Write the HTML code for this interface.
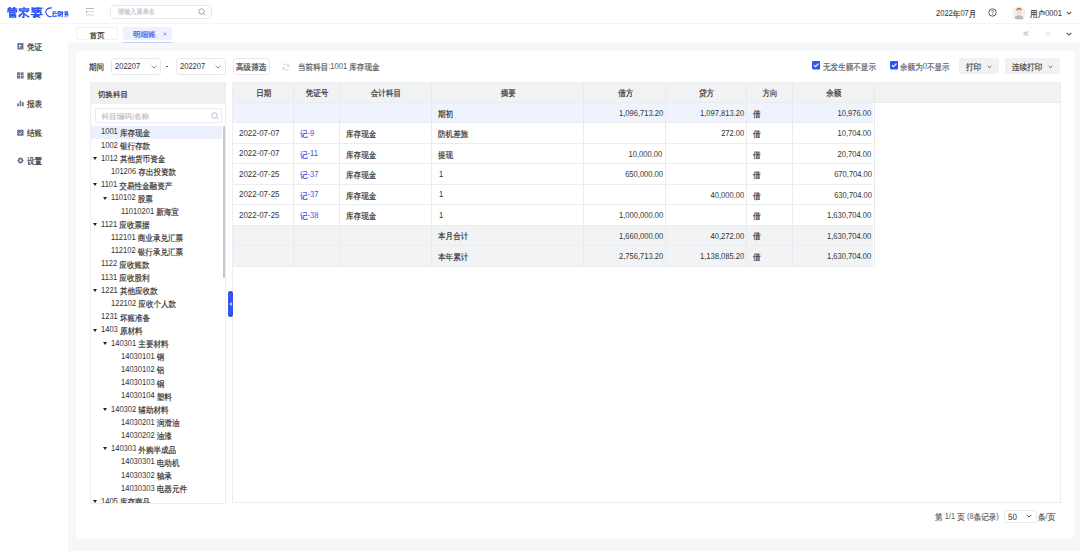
<!DOCTYPE html>
<html><head><meta charset="utf-8">
<style>
@font-face{font-family:"LCJK";src:local("Liberation Sans");size-adjust:130%;unicode-range:U+2E80-9FFF,U+F900-FAFF,U+FF00-FFEF,U+3000-303F;}
*{box-sizing:border-box;margin:0;padding:0}
html,body{width:1080px;height:551px;overflow:hidden}
body{position:relative;background:#f6f7f9;font-family:"LCJK","Liberation Sans",sans-serif;font-size:7.6px;color:#333;line-height:1;text-rendering:geometricPrecision}
.a{position:absolute;white-space:nowrap}
#hdr{left:0;top:0;width:1080px;height:24px;background:#fff;border-bottom:1px solid #f4f5f7}
#side{left:0;top:23.5px;width:68px;height:528px;background:#fff}
#tabs{left:68px;top:23.5px;width:1012px;height:18.5px;background:#fff}
#card{left:76px;top:51px;width:998.5px;height:487.5px;background:#fff;border-radius:5px}
.logo{left:7px;top:5.5px;font-size:11.5px;font-weight:bold;color:#2a4fe6;letter-spacing:0.5px}
.logo2{left:48px;top:9px;font-size:6.5px;font-weight:bold;color:#2a4fe6}
.srch{left:110px;top:5px;width:101.5px;height:13.5px;border:1px solid #e6e8ee;border-radius:5px;background:#fff}
.ph{color:#c3c6cf}
.nav{left:16.8px;width:6px;height:6.5px}
.navt{left:27.7px;color:#333}
.tab{top:27px;height:13px;border-radius:2px;line-height:13px;text-align:center}

.sel{top:58px;height:16.5px;border:1px solid #e7e9ee;border-radius:2.5px;background:#fff}
.btn{top:57.5px;height:16.5px;border-radius:2.5px;background:#f1f2f5}

#tree{left:90px;top:82px;width:135.5px;height:421.5px;border:1px solid #ededf0;overflow:hidden;background:#fff}
#tree .th{position:absolute;left:0;top:0;width:100%;height:20.5px;background:#f1f1f2}
#tree .tht{position:absolute;left:7.5px;top:7.5px;color:#333}
#tree .ts{position:absolute;left:3.5px;top:24.5px;width:127px;height:15.5px;border:1px solid #e8eaef;border-radius:2.5px}
#tree .tsp{position:absolute;left:10.5px;top:28.5px;color:#c0c4cc}
.ti{position:absolute;left:0;width:131px;height:13.2px;color:#333;white-space:nowrap}
.ti span{position:absolute;top:1.9px}
.ti svg{position:absolute;top:5.2px}
.sb{position:absolute;left:131.5px;top:42.5px;width:2.5px;height:152px;background:#c5c8d0;border-radius:1px}
#tbl{left:231.8px;top:82px;width:829.2px;height:420.5px;border:1px solid #ededf0;background:#fff;overflow:hidden}
.hd{position:absolute;left:0;top:0;width:100%;height:20px;background:#f1f2f4;border-bottom:1px solid #e9ebef}
.cl{position:absolute;width:1px;background:#e9eaed}
.rw{position:absolute;left:0;width:640.7px;height:20.45px;border-bottom:1px solid #ebedf1}
.c{position:absolute;top:7.2px;color:#333;white-space:nowrap}
.n{letter-spacing:0}
.lk{color:#4b4ee4}
.c,.ti span,.t{font-size:8.6px;transform:scaleX(0.88);transform-origin:0 0}
.c.n{transform-origin:100% 0}
.c.d{transform:scaleX(0.92)}
.c.hc{transform-origin:50% 0}
.t{margin-left:-0.8px;margin-top:-0.7px}
.tab.t{margin:0;transform:none;font-size:7.6px}
.tht{margin-top:-0.8px;margin-left:-0.8px}

.k{font-weight:inherit;position:relative;top:0.16em;-webkit-text-stroke:0.2px currentColor}
</style></head><body>
<div id="hdr" class="a"></div>
<div id="side" class="a"></div>
<div id="tabs" class="a"></div>
<div id="card" class="a"></div>

<!-- header -->
<svg class="a" style="left:6.5px;top:6.5px" width="62" height="11" viewBox="0 0 62 11">
<g stroke="#2c54f2" stroke-width="1.45" fill="none" stroke-linecap="square">
<path d="M1.5 1.3 L3 0.6 M1.2 2 H4.5 M2.5 2 V3 M6 1.3 L7.5 0.6 M5.8 2 H9.5 M7 2 V3 M1 4.8 V3.6 H9.5 V4.8 M2.8 5.3 V10 M2.8 5.3 H7.8 V7.2 H2.8 M2.8 8.3 H8.5 V10 H2.8"/>
<path d="M17 0.2 V1.5 M12.5 3.3 V2 H21.5 V3.3 M13.5 4 H20 M17 4 C16 6 14.5 7.5 12.3 8.5 M16.2 5.8 C17.8 7.5 19.5 9 21.6 9.8 M16.8 6.5 V10.2 H15.6 M14.5 7 L12.5 9.6 M19.8 4.8 L21.2 3.8"/>
<path d="M25.2 0.8 L26 1.4 M25 2.6 L25.8 3.2 M25 5 L26.3 4 M27.5 1.3 H34.5 M31 0.2 V3.7 M27.5 1.3 V4.6 L27 5.3 M28 3.3 H33.8 C33 4.6 31 5.3 28.3 5.6 M29 3.6 L34 5.4 M24.5 7.6 H35 M29 6.2 C28.5 8 27.5 9.5 26 10.2 C29 10 32 9.2 33.6 6.6 M28.3 8.6 L32.6 10.3"/>
</g>
<circle cx="36.6" cy="1.4" r="0.6" fill="none" stroke="#7a92f5" stroke-width="0.3"/>
<path d="M43.6 1.6 C41.8 0.6 38.8 1.8 38.8 5 C38.8 8.3 41.8 10 44.5 9.4" stroke="#2c54f2" stroke-width="1.2" fill="none"/>
<path d="M40.8 2.6 C41.5 0.9 43.2 0.3 45.2 1" stroke="#2c54f2" stroke-width="0.9" fill="none"/>
<g stroke="#2c54f2" stroke-width="1" fill="none">
<path d="M45.5 4.8 H49.3 M45 6.3 H50 M47 6.3 L45.6 9.4 H49.5 L48.5 8"/>
<path d="M51 4.5 H53.3 V8.7 H51 Z M52.1 5 V8.2 M51.2 9.6 L51.8 8.7 M53.2 9.6 L52.6 8.7 M53.8 5.5 H56.2 M55.3 4.1 V9.8 H54.5 M55.2 6 L53.8 8.3"/>
<path d="M58 4.2 L57.2 5.4 M58.3 4.8 H61 L57.3 7.2 M58 5.5 L61.5 7.2 M57.5 7.6 H61 C61 9 60.5 9.8 59.5 9.8 M59.2 7.6 C59 8.8 58.2 9.6 57.3 10"/>
</g>
</svg>
<svg class="a" style="left:85.8px;top:8px" width="9" height="8" viewBox="0 0 9 8">
<rect x="0" y="0.1" width="8" height="0.8" fill="#a5a5a8"/><rect x="0.6" y="3.3" width="7.4" height="0.8" fill="#c9c9cc"/><rect x="0" y="3" width="0.9" height="1.5" fill="#8a8a8e"/><rect x="0" y="6.5" width="8" height="0.9" fill="#c9c9cc"/>
</svg>
<div class="a srch"></div>
<div class="a t ph" style="left:119px;top:8.5px;font-size:7px"><b class="k">请输入菜单名</b></div>
<svg class="a" style="left:197.5px;top:8px" width="8" height="8" viewBox="0 0 8 8"><circle cx="3.5" cy="3.5" r="2.7" stroke="#8a8d95" stroke-width="0.8" fill="none"/><path d="M5.5 5.5 L7.3 7.3" stroke="#8a8d95" stroke-width="0.8"/></svg>

<div class="a t" style="left:936.5px;top:9.5px;color:#333">2022<b class="k">年</b>07<b class="k">月</b></div>
<svg class="a" style="left:987.5px;top:8px" width="9" height="9" viewBox="0 0 9 9"><circle cx="4.5" cy="4.5" r="3.7" stroke="#5a5a5a" stroke-width="0.95" fill="none"/><path d="M3.2 3.3 C3.3 2.4 5.7 2.3 5.7 3.4 C5.7 4.3 4.5 4.3 4.5 5.4" stroke="#5a5a5a" stroke-width="0.85" fill="none"/><circle cx="4.5" cy="6.5" r="0.5" fill="#5a5a5a"/></svg>
<svg class="a" style="left:1011.5px;top:5.5px" width="14" height="14" viewBox="0 0 14 14">
<circle cx="7" cy="7" r="6.8" fill="#f1f1f1"/>
<path d="M2.5 12.5 C3 10 5 9.3 7 9.3 C9 9.3 11 10 11.5 12.5 C10 13.7 4 13.7 2.5 12.5Z" fill="#b9b9b9"/>
<ellipse cx="7" cy="5.8" rx="2.4" ry="2.9" fill="#f6ddd0"/>
<path d="M4.4 5 C4.2 2.6 5.5 1.8 7 1.8 C8.6 1.8 9.8 2.6 9.6 5 C9 3.8 8 3.5 7 3.5 C6 3.5 5 3.8 4.4 5Z" fill="#c8692c"/>
</svg>
<div class="a t" style="left:1031px;top:9.5px;color:#333"><b class="k">用户</b>0001</div>
<svg class="a" style="left:1065.5px;top:11px" width="6" height="4" viewBox="0 0 6 4"><path d="M0.8 0.8 L3 3 L5.2 0.8" stroke="#555" stroke-width="1.05" fill="none"/></svg>

<!-- sidebar -->
<svg class="a" style="left:16.5px;top:43px" width="7" height="7" viewBox="0 0 7 7"><rect x="0.3" y="0" width="6.2" height="6.6" rx="0.6" fill="#6e7699"/><rect x="2" y="2" width="2" height="1.2" fill="#fff"/><rect x="2" y="3.2" width="0.8" height="1.6" fill="#fff"/></svg>
<div class="a t navt" style="top:42.5px"><b class="k">凭证</b></div>
<svg class="a" style="left:16.5px;top:71.5px" width="7" height="7" viewBox="0 0 7 7"><rect x="0" y="0.3" width="3" height="6.2" fill="#6e7699"/><rect x="3.6" y="0.3" width="3" height="6.2" fill="#6e7699"/><rect x="0.6" y="3" width="1.8" height="0.7" fill="#fff"/><rect x="4.2" y="3" width="1.8" height="0.7" fill="#fff"/></svg>
<div class="a t navt" style="top:71px"><b class="k">账簿</b></div>
<svg class="a" style="left:16.5px;top:100px" width="7" height="7" viewBox="0 0 7 7"><rect x="0.2" y="3.4" width="1.7" height="2.9" fill="#6e7699"/><rect x="2.6" y="0.6" width="1.7" height="5.7" fill="#6e7699"/><rect x="5" y="2.2" width="1.7" height="4.1" fill="#6e7699"/></svg>
<div class="a t navt" style="top:99.5px"><b class="k">报表</b></div>
<svg class="a" style="left:16.5px;top:128.5px" width="7" height="7" viewBox="0 0 7 7"><rect x="0.2" y="0.9" width="6.4" height="5.9" rx="0.6" fill="#6e7699"/><rect x="1.5" y="0" width="0.8" height="1.5" fill="#6e7699"/><rect x="4.5" y="0" width="0.8" height="1.5" fill="#6e7699"/><path d="M1.8 3.9 L3 5 L5 2.9" stroke="#fff" stroke-width="0.8" fill="none"/></svg>
<div class="a t navt" style="top:128px"><b class="k">结账</b></div>
<svg class="a" style="left:16.5px;top:157px" width="7" height="7" viewBox="0 0 7 7"><path d="M3.5 0 L4.3 1 L5.6 0.9 L5.7 2.2 L7 3.5 L5.7 4.8 L5.6 6.1 L4.3 6 L3.5 7 L2.7 6 L1.4 6.1 L1.3 4.8 L0 3.5 L1.3 2.2 L1.4 0.9 L2.7 1Z" fill="#6e7699"/><circle cx="3.5" cy="3.5" r="1.1" fill="#fff"/></svg>
<div class="a t navt" style="top:156.5px"><b class="k">设置</b></div>

<!-- tabs -->
<div class="a t tab" style="left:76px;width:42px;border:1px solid #f0f1f4;background:#fff;color:#333"><b class="k">首页</b></div>
<div class="a tab" style="left:123px;width:49px;background:#eef2fe;color:#4a5ae6"><span style="margin-left:-6px"><b class="k">明细账</b></span></div>
<svg class="a" style="left:162.5px;top:32px" width="4" height="4" viewBox="0 0 4 4"><path d="M0.6 0.6 L3.4 3.4 M3.4 0.6 L0.6 3.4" stroke="#6a78e8" stroke-width="0.7"/></svg>
<div class="a" style="left:123px;top:41.5px;width:49px;height:0.8px;background:#c7d0fa"></div>
<svg class="a" style="left:1022.5px;top:31px" width="6" height="5" viewBox="0 0 6 5"><path d="M2.8 0.5 L0.8 2.5 L2.8 4.5 M5.2 0.5 L3.2 2.5 L5.2 4.5" stroke="#777" stroke-width="0.7" fill="none"/></svg>
<svg class="a" style="left:1044.5px;top:31px" width="6" height="5" viewBox="0 0 6 5"><path d="M0.8 0.5 L2.8 2.5 L0.8 4.5 M3.2 0.5 L5.2 2.5 L3.2 4.5" stroke="#c4c4c4" stroke-width="0.7" fill="none"/></svg>
<svg class="a" style="left:1065.5px;top:31.5px" width="6" height="4" viewBox="0 0 6 4"><path d="M0.6 0.8 L3 3 L5.4 0.8" stroke="#555" stroke-width="1.05" fill="none"/></svg>


<!-- filter row -->
<div class="a t" style="left:90px;top:62.5px"><b class="k">期间</b></div>
<div class="a sel" style="left:111px;width:50px"></div>
<div class="a t" style="left:116px;top:62.5px">202207</div>
<svg class="a" style="left:150.5px;top:64.5px" width="6" height="4" viewBox="0 0 6 4"><path d="M0.6 0.8 L3 3 L5.4 0.8" stroke="#7a7f8a" stroke-width="0.95" fill="none"/></svg>
<div class="a" style="left:166px;top:66.3px;width:2.2px;height:0.8px;background:#555"></div>
<div class="a sel" style="left:175.5px;width:50px"></div>
<div class="a t" style="left:180.5px;top:62.5px">202207</div>
<svg class="a" style="left:215px;top:64.5px" width="6" height="4" viewBox="0 0 6 4"><path d="M0.6 0.8 L3 3 L5.4 0.8" stroke="#7a7f8a" stroke-width="0.95" fill="none"/></svg>
<div class="a sel" style="left:232.5px;width:37px"></div>
<div class="a t" style="left:236.5px;top:62.5px;color:#444"><b class="k">高级筛选</b></div>
<svg class="a" style="left:281.5px;top:62.5px" width="8" height="8" viewBox="0 0 8 8"><path d="M6.8 3.2 A3 3 0 0 0 1.3 2.5 M1.2 4.8 A3 3 0 0 0 6.7 5.5" stroke="#c8c8c8" stroke-width="0.8" fill="none"/><path d="M6.9 1.5 L6.9 3.4 L5 3.4 M1.1 6.5 L1.1 4.6 L3 4.6" stroke="#c8c8c8" stroke-width="0.8" fill="none"/></svg>
<div class="a t" style="left:299px;top:62.5px;color:#555"><b class="k">当前科目</b>:1001 <b class="k">库存现金</b></div>

<svg class="a" style="left:811.8px;top:61.4px" width="8.4" height="8.4" viewBox="0 0 9 9"><rect x="0" y="0" width="9" height="9" rx="1.4" fill="#3153f4"/><path d="M2.1 4.5 L3.8 6.1 L6.9 2.9" stroke="#fff" stroke-width="1.2" fill="none"/></svg>
<div class="a t" style="left:823.5px;top:62.5px;color:#606266"><b class="k">无发生额不显示</b></div>
<svg class="a" style="left:889.8px;top:61.4px" width="8.4" height="8.4" viewBox="0 0 9 9"><rect x="0" y="0" width="9" height="9" rx="1.4" fill="#3153f4"/><path d="M2.1 4.5 L3.8 6.1 L6.9 2.9" stroke="#fff" stroke-width="1.2" fill="none"/></svg>
<div class="a t" style="left:901px;top:62.5px;color:#606266"><b class="k">余额为</b>0<b class="k">不显示</b></div>
<div class="a btn" style="left:958.5px;width:40.5px"></div>
<div class="a t" style="left:967px;top:62.5px;color:#444"><b class="k">打印</b></div>
<svg class="a" style="left:986.5px;top:65px" width="5" height="4" viewBox="0 0 5 4"><path d="M0.6 0.9 L2.5 2.7 L4.4 0.9" stroke="#555" stroke-width="0.95" fill="none"/></svg>
<div class="a btn" style="left:1005px;width:55px"></div>
<div class="a t" style="left:1013px;top:62.5px;color:#444"><b class="k">连续打印</b></div>
<svg class="a" style="left:1047.5px;top:65px" width="5" height="4" viewBox="0 0 5 4"><path d="M0.6 0.9 L2.5 2.7 L4.4 0.9" stroke="#555" stroke-width="0.95" fill="none"/></svg>
<div id="tree" class="a"><div class="th"></div><div class="tht"><b class="k">切换科目</b></div><div class="ts"></div><div class="tsp"><b class="k">科目编码</b>|<b class="k">名称</b></div>
<svg style="position:absolute;left:119.5px;top:28.5px" width="8" height="8" viewBox="0 0 8 8"><circle cx="3.5" cy="3.5" r="2.7" stroke="#aab" stroke-width="0.8" fill="none"/><path d="M5.5 5.5 L7.2 7.2" stroke="#aab" stroke-width="0.8"/></svg>
<div class="ti" style="top:42.50px;background:#eaf0fd;"><span style="left:10.0px">1001 <b class="k">库存现金</b></span></div>
<div class="ti" style="top:55.70px;"><span style="left:10.0px">1002 <b class="k">银行存款</b></span></div>
<div class="ti" style="top:68.90px;"><svg style="left:2.4px" width="4" height="3" viewBox="0 0 4 3"><path d="M0 0H4L2 3Z" fill="#222"/></svg><span style="left:10.0px">1012 <b class="k">其他货币资金</b></span></div>
<div class="ti" style="top:82.10px;"><span style="left:20.0px">101206 <b class="k">存出投资款</b></span></div>
<div class="ti" style="top:95.30px;"><svg style="left:2.4px" width="4" height="3" viewBox="0 0 4 3"><path d="M0 0H4L2 3Z" fill="#222"/></svg><span style="left:10.0px">1101 <b class="k">交易性金融资产</b></span></div>
<div class="ti" style="top:108.50px;"><svg style="left:12.4px" width="4" height="3" viewBox="0 0 4 3"><path d="M0 0H4L2 3Z" fill="#222"/></svg><span style="left:20.0px">110102 <b class="k">股票</b></span></div>
<div class="ti" style="top:121.70px;"><span style="left:30.0px">11010201 <b class="k">新海宜</b></span></div>
<div class="ti" style="top:134.90px;"><svg style="left:2.4px" width="4" height="3" viewBox="0 0 4 3"><path d="M0 0H4L2 3Z" fill="#222"/></svg><span style="left:10.0px">1121 <b class="k">应收票据</b></span></div>
<div class="ti" style="top:148.10px;"><span style="left:20.0px">112101 <b class="k">商业承兑汇票</b></span></div>
<div class="ti" style="top:161.30px;"><span style="left:20.0px">112102 <b class="k">银行承兑汇票</b></span></div>
<div class="ti" style="top:174.50px;"><span style="left:10.0px">1122 <b class="k">应收账款</b></span></div>
<div class="ti" style="top:187.70px;"><span style="left:10.0px">1131 <b class="k">应收股利</b></span></div>
<div class="ti" style="top:200.90px;"><svg style="left:2.4px" width="4" height="3" viewBox="0 0 4 3"><path d="M0 0H4L2 3Z" fill="#222"/></svg><span style="left:10.0px">1221 <b class="k">其他应收款</b></span></div>
<div class="ti" style="top:214.10px;"><span style="left:20.0px">122102 <b class="k">应收个人款</b></span></div>
<div class="ti" style="top:227.30px;"><span style="left:10.0px">1231 <b class="k">坏账准备</b></span></div>
<div class="ti" style="top:240.50px;"><svg style="left:2.4px" width="4" height="3" viewBox="0 0 4 3"><path d="M0 0H4L2 3Z" fill="#222"/></svg><span style="left:10.0px">1403 <b class="k">原材料</b></span></div>
<div class="ti" style="top:253.70px;"><svg style="left:12.4px" width="4" height="3" viewBox="0 0 4 3"><path d="M0 0H4L2 3Z" fill="#222"/></svg><span style="left:20.0px">140301 <b class="k">主要材料</b></span></div>
<div class="ti" style="top:266.90px;"><span style="left:30.0px">14030101 <b class="k">钢</b></span></div>
<div class="ti" style="top:280.10px;"><span style="left:30.0px">14030102 <b class="k">铝</b></span></div>
<div class="ti" style="top:293.30px;"><span style="left:30.0px">14030103 <b class="k">铜</b></span></div>
<div class="ti" style="top:306.50px;"><span style="left:30.0px">14030104 <b class="k">塑料</b></span></div>
<div class="ti" style="top:319.70px;"><svg style="left:12.4px" width="4" height="3" viewBox="0 0 4 3"><path d="M0 0H4L2 3Z" fill="#222"/></svg><span style="left:20.0px">140302 <b class="k">辅助材料</b></span></div>
<div class="ti" style="top:332.90px;"><span style="left:30.0px">14030201 <b class="k">润滑油</b></span></div>
<div class="ti" style="top:346.10px;"><span style="left:30.0px">14030202 <b class="k">油漆</b></span></div>
<div class="ti" style="top:359.30px;"><svg style="left:12.4px" width="4" height="3" viewBox="0 0 4 3"><path d="M0 0H4L2 3Z" fill="#222"/></svg><span style="left:20.0px">140303 <b class="k">外购半成品</b></span></div>
<div class="ti" style="top:372.50px;"><span style="left:30.0px">14030301 <b class="k">电动机</b></span></div>
<div class="ti" style="top:385.70px;"><span style="left:30.0px">14030302 <b class="k">轴承</b></span></div>
<div class="ti" style="top:398.90px;"><span style="left:30.0px">14030303 <b class="k">电器元件</b></span></div>
<div class="ti" style="top:412.10px;"><svg style="left:2.4px" width="4" height="3" viewBox="0 0 4 3"><path d="M0 0H4L2 3Z" fill="#222"/></svg><span style="left:10.0px">1405 <b class="k">库存商品</b></span></div>
<div class="sb"></div></div>
<div id="tbl" class="a"><div class="hd"></div>
<div class="c hc" style="left:0.0px;width:61.7px;text-align:center;top:4.9px"><b class="k">日期</b></div>
<div class="c hc" style="left:61.7px;width:46.0px;text-align:center;top:4.9px"><b class="k">凭证号</b></div>
<div class="c hc" style="left:107.7px;width:91.8px;text-align:center;top:4.9px"><b class="k">会计科目</b></div>
<div class="c hc" style="left:199.5px;width:152.4px;text-align:center;top:4.9px"><b class="k">摘要</b></div>
<div class="c hc" style="left:351.9px;width:81.6px;text-align:center;top:4.9px"><b class="k">借方</b></div>
<div class="c hc" style="left:433.5px;width:81.2px;text-align:center;top:4.9px"><b class="k">贷方</b></div>
<div class="c hc" style="left:514.7px;width:46.0px;text-align:center;top:4.9px"><b class="k">方向</b></div>
<div class="c hc" style="left:560.7px;width:81.7px;text-align:center;top:4.9px"><b class="k">余额</b></div>
<div class="rw" style="top:20.00px;background:#eef3fe"></div>
<div class="c" style="top:25.40px;left:205.3px"><b class="k">期初</b></div>
<div class="c n" style="top:26.00px;right:397.3px">1,096,713.20</div>
<div class="c n" style="top:26.00px;right:316.1px">1,097,813.20</div>
<div class="c" style="top:25.40px;left:520.5px"><b class="k">借</b></div>
<div class="c n" style="top:26.00px;right:188.4px">10,976.00</div>
<div class="rw" style="top:40.45px;background:#fff"></div>
<div class="c d" style="top:45.85px;left:6.6px">2022-07-07</div>
<div class="c lk" style="top:45.85px;left:67.5px"><b class="k">记</b>-9</div>
<div class="c" style="top:45.85px;left:113.5px"><b class="k">库存现金</b></div>
<div class="c" style="top:45.85px;left:205.3px"><b class="k">防机差旅</b></div>
<div class="c n" style="top:46.45px;right:316.1px">272.00</div>
<div class="c" style="top:45.85px;left:520.5px"><b class="k">借</b></div>
<div class="c n" style="top:46.45px;right:188.4px">10,704.00</div>
<div class="rw" style="top:60.90px;background:#fff"></div>
<div class="c d" style="top:66.30px;left:6.6px">2022-07-07</div>
<div class="c lk" style="top:66.30px;left:67.5px"><b class="k">记</b>-11</div>
<div class="c" style="top:66.30px;left:113.5px"><b class="k">库存现金</b></div>
<div class="c" style="top:66.30px;left:205.3px"><b class="k">提现</b></div>
<div class="c n" style="top:66.90px;right:397.3px">10,000.00</div>
<div class="c" style="top:66.30px;left:520.5px"><b class="k">借</b></div>
<div class="c n" style="top:66.90px;right:188.4px">20,704.00</div>
<div class="rw" style="top:81.35px;background:#fff"></div>
<div class="c d" style="top:86.75px;left:6.6px">2022-07-25</div>
<div class="c lk" style="top:86.75px;left:67.5px"><b class="k">记</b>-37</div>
<div class="c" style="top:86.75px;left:113.5px"><b class="k">库存现金</b></div>
<div class="c" style="top:86.75px;left:206.1px">1</div>
<div class="c n" style="top:87.35px;right:397.3px">650,000.00</div>
<div class="c" style="top:86.75px;left:520.5px"><b class="k">借</b></div>
<div class="c n" style="top:87.35px;right:188.4px">670,704.00</div>
<div class="rw" style="top:101.80px;background:#fff"></div>
<div class="c d" style="top:107.20px;left:6.6px">2022-07-25</div>
<div class="c lk" style="top:107.20px;left:67.5px"><b class="k">记</b>-37</div>
<div class="c" style="top:107.20px;left:113.5px"><b class="k">库存现金</b></div>
<div class="c" style="top:107.20px;left:206.1px">1</div>
<div class="c n" style="top:107.80px;right:316.1px">40,000.00</div>
<div class="c" style="top:107.20px;left:520.5px"><b class="k">借</b></div>
<div class="c n" style="top:107.80px;right:188.4px">630,704.00</div>
<div class="rw" style="top:122.25px;background:#fff"></div>
<div class="c d" style="top:127.65px;left:6.6px">2022-07-25</div>
<div class="c lk" style="top:127.65px;left:67.5px"><b class="k">记</b>-38</div>
<div class="c" style="top:127.65px;left:113.5px"><b class="k">库存现金</b></div>
<div class="c" style="top:127.65px;left:206.1px">1</div>
<div class="c n" style="top:128.25px;right:397.3px">1,000,000.00</div>
<div class="c" style="top:127.65px;left:520.5px"><b class="k">借</b></div>
<div class="c n" style="top:128.25px;right:188.4px">1,630,704.00</div>
<div class="rw" style="top:142.70px;background:#f2f3f5"></div>
<div class="c" style="top:148.10px;left:205.3px"><b class="k">本月合计</b></div>
<div class="c n" style="top:148.70px;right:397.3px">1,660,000.00</div>
<div class="c n" style="top:148.70px;right:316.1px">40,272.00</div>
<div class="c" style="top:148.10px;left:520.5px"><b class="k">借</b></div>
<div class="c n" style="top:148.70px;right:188.4px">1,630,704.00</div>
<div class="rw" style="top:163.15px;background:#f2f3f5"></div>
<div class="c" style="top:168.55px;left:205.3px"><b class="k">本年累计</b></div>
<div class="c n" style="top:169.15px;right:397.3px">2,756,713.20</div>
<div class="c n" style="top:169.15px;right:316.1px">1,138,085.20</div>
<div class="c" style="top:168.55px;left:520.5px"><b class="k">借</b></div>
<div class="c n" style="top:169.15px;right:188.4px">1,630,704.00</div>
<div class="cl" style="left:60.2px;top:0;height:183.6px"></div>
<div class="cl" style="left:106.2px;top:0;height:183.6px"></div>
<div class="cl" style="left:198.0px;top:0;height:183.6px"></div>
<div class="cl" style="left:350.4px;top:0;height:183.6px"></div>
<div class="cl" style="left:432.0px;top:0;height:183.6px"></div>
<div class="cl" style="left:513.2px;top:0;height:183.6px"></div>
<div class="cl" style="left:559.2px;top:0;height:183.6px"></div>
<div class="cl" style="left:640.9px;top:0;height:183.6px"></div>
</div>
<div class="a" style="left:228.3px;top:291.2px;width:4.4px;height:25.6px;background:#3553e6;border-radius:2.2px"></div>
<svg class="a" style="left:229px;top:302px" width="3" height="4" viewBox="0 0 3 4"><path d="M2.6 0.3 V3.7 L0.4 2Z" fill="#fff"/></svg>
<div class="a t" style="left:935.5px;top:512.5px;color:#606266"><b class="k">第</b> 1/1 <b class="k">页</b> (8<b class="k">条记录</b>)</div>
<div class="a" style="left:1003.5px;top:510px;width:33px;height:12.5px;border:1px solid #e9eaee;border-radius:2px;background:#fff"></div>
<div class="a t" style="left:1009px;top:513.3px;color:#333;font-size:9px">50</div>
<svg class="a" style="left:1025.8px;top:514.3px" width="6" height="4" viewBox="0 0 6 4"><path d="M0.7 0.8 L3 3.1 L5.3 0.8" stroke="#555" stroke-width="1" fill="none"/></svg>
<div class="a t" style="left:1038.5px;top:512.5px;color:#606266"><b class="k">条</b>/<b class="k">页</b></div>
</body></html>
